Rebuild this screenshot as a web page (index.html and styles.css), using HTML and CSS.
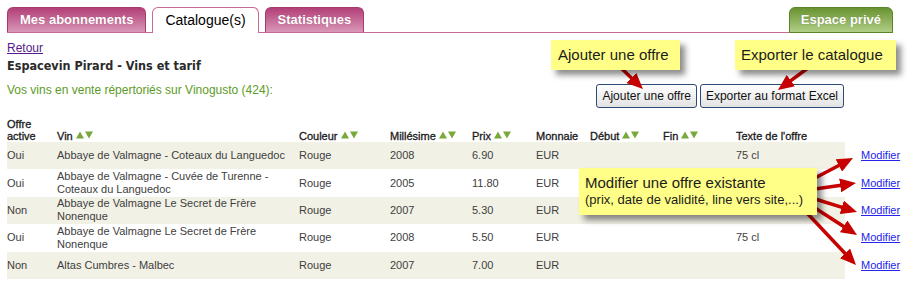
FILE: index.html
```html
<!DOCTYPE html>
<html lang="fr">
<head>
<meta charset="utf-8">
<title>Catalogue(s) - Espace privé</title>
<link rel="stylesheet" href="styles.css">
</head>
<body>
<div class="page">
  <nav class="tabs">
    <a class="tab tab-pink" href="#">Mes abonnements</a>
    <a class="tab tab-active" href="#">Catalogue(s)</a>
    <a class="tab tab-pink" href="#">Statistiques</a>
    <span class="tabs-fill"></span>
    <a class="tab tab-green" href="#">Espace privé</a>
  </nav>

  <section class="intro">
    <div class="intro-text">
      <a class="back" href="#">Retour</a>
      <h1>Espacevin Pirard - Vins et tarif</h1>
      <p class="count">Vos vins en vente répertoriés sur Vinogusto (424):</p>
    </div>
    <div class="actions">
      <button type="button">Ajouter une offre</button>
      <button type="button">Exporter au format Excel</button>
    </div>
  </section>

  <table class="wines">
    <colgroup>
      <col class="c-active"><col class="c-vin"><col class="c-couleur"><col class="c-mill"><col class="c-prix"><col class="c-monnaie"><col class="c-debut"><col class="c-fin"><col class="c-texte"><col class="c-edit">
    </colgroup>
    <thead>
      <tr>
        <th>Offre<br>active</th>
        <th>Vin <svg class="sort" viewBox="0 0 17 8"><path d="M0 7.5L4 0.5L8 7.5Z M9 0.5H17L13 7.5Z"/></svg></th>
        <th>Couleur <svg class="sort" viewBox="0 0 17 8"><path d="M0 7.5L4 0.5L8 7.5Z M9 0.5H17L13 7.5Z"/></svg></th>
        <th>Millésime <svg class="sort" viewBox="0 0 17 8"><path d="M0 7.5L4 0.5L8 7.5Z M9 0.5H17L13 7.5Z"/></svg></th>
        <th>Prix <svg class="sort" viewBox="0 0 17 8"><path d="M0 7.5L4 0.5L8 7.5Z M9 0.5H17L13 7.5Z"/></svg></th>
        <th>Monnaie</th>
        <th>Début <svg class="sort" viewBox="0 0 17 8"><path d="M0 7.5L4 0.5L8 7.5Z M9 0.5H17L13 7.5Z"/></svg></th>
        <th>Fin <svg class="sort" viewBox="0 0 17 8"><path d="M0 7.5L4 0.5L8 7.5Z M9 0.5H17L13 7.5Z"/></svg></th>
        <th>Texte de l'offre</th>
        <th class="edit"></th>
      </tr>
    </thead>
    <tbody>
      <tr><td>Oui</td><td>Abbaye de Valmagne - Coteaux du Languedoc</td><td>Rouge</td><td>2008</td><td>6.90</td><td>EUR</td><td></td><td></td><td>75 cl</td><td class="edit"><a href="#">Modifier</a></td></tr>
      <tr><td>Oui</td><td>Abbaye de Valmagne - Cuvée de Turenne - Coteaux du Languedoc</td><td>Rouge</td><td>2005</td><td>11.80</td><td>EUR</td><td></td><td></td><td></td><td class="edit"><a href="#">Modifier</a></td></tr>
      <tr><td>Non</td><td>Abbaye de Valmagne Le Secret de Frère Nonenque</td><td>Rouge</td><td>2007</td><td>5.30</td><td>EUR</td><td></td><td></td><td></td><td class="edit"><a href="#">Modifier</a></td></tr>
      <tr><td>Oui</td><td>Abbaye de Valmagne Le Secret de Frère Nonenque</td><td>Rouge</td><td>2008</td><td>5.50</td><td>EUR</td><td></td><td></td><td>75 cl</td><td class="edit"><a href="#">Modifier</a></td></tr>
      <tr><td>Non</td><td>Altas Cumbres - Malbec</td><td>Rouge</td><td>2007</td><td>7.00</td><td>EUR</td><td></td><td></td><td></td><td class="edit"><a href="#">Modifier</a></td></tr>
    </tbody>
  </table>

  <svg class="arrows" viewBox="0 0 909 284">
    <defs>
      <marker id="head" viewBox="0 0 16 14" refX="8" refY="7" markerWidth="16" markerHeight="14" markerUnits="userSpaceOnUse" orient="auto">
        <path d="M0 0L16 7L0 14Z" fill="#c70000"/>
      </marker>
    </defs>
    <g stroke="#c70000" stroke-width="3.5" fill="none" marker-end="url(#head)">
      <line x1="618" y1="65" x2="637.2" y2="83.5"/>
      <line x1="812" y1="65" x2="784.4" y2="85.3"/>
      <line x1="815" y1="178" x2="845.9" y2="161.7"/>
      <line x1="815" y1="189" x2="848.1" y2="184.2"/>
      <line x1="815" y1="199" x2="849.4" y2="209.6"/>
      <line x1="815" y1="208" x2="850.3" y2="230.7"/>
      <line x1="807" y1="213" x2="850.5" y2="259.2"/>
    </g>
  </svg>

  <div class="callout callout-add">Ajouter une offre</div>
  <div class="callout callout-export">Exporter le catalogue</div>
  <div class="callout callout-edit">
    <span class="callout-title">Modifier une offre existante</span>
    <span class="callout-sub">(prix, date de validité, line vers site,...)</span>
  </div>
</div>
</body>
</html>
```

FILE: styles.css
```css
* {
  box-sizing: border-box;
}

body {
  margin: 0;
  background: #fff;
  font-family: "Liberation Sans", Arial, sans-serif;
}

.page {
  position: relative;
  width: 909px;
  height: 284px;
  padding: 7px 7px 0;
  overflow: hidden;
}

/* Tabs */
.tabs {
  display: flex;
  align-items: flex-end;
  gap: 6px;
  height: 26px;
  margin-right: 9px;
  border-bottom: 1px solid #c86a96;
}

.tab {
  display: block;
  height: 25px;
  padding: 0 12px;
  border: 1px solid;
  border-bottom: 0;
  border-radius: 6px 6px 0 0;
  font-size: 13px;
  font-weight: bold;
  line-height: 23px;
  color: #fff;
  text-decoration: none;
  white-space: nowrap;
}

.tab-pink {
  background: linear-gradient(#b23f78, #d997b7);
  border-color: #a73a6e;
  text-shadow: 0 0 1px rgba(90, 0, 40, 0.35);
}

.tab-active {
  height: 26px;
  margin-bottom: -1px;
  background: #fff;
  border-color: #c86a96;
  color: #000;
  font-size: 14px;
  font-weight: normal;
  line-height: 24px;
}

.tab-green {
  height: 26px;
  margin-bottom: -1px;
  padding: 0 11px;
  background: linear-gradient(#689330, #b1ce86);
  border-color: #5a8427;
  border-bottom: 1px solid #5a8427;
  text-shadow: 0 0 1px rgba(20, 50, 0, 0.35);
}

.tabs-fill {
  flex: 1;
}

/* Intro */
.intro {
  display: flex;
  justify-content: space-between;
  align-items: flex-start;
  width: 838px;
}

.intro-text {
  padding-top: 8px;
}

.back {
  display: block;
  font-size: 12px;
  line-height: 14px;
  color: #551a8b;
}

.intro h1 {
  margin: 3px 0 0;
  font-family: "DejaVu Sans Condensed", "DejaVu Sans", sans-serif;
  font-size: 12.5px;
  font-weight: bold;
  line-height: 16px;
  color: #2a2a2a;
}

.count {
  margin: 9px 0 0;
  font-size: 12px;
  line-height: 14px;
  color: #5c9b26;
}

.actions {
  display: flex;
  gap: 3px;
  margin-top: 51px;
  margin-right: 1px;
}

.actions button {
  height: 24px;
  padding: 0 5px;
  border: 1px solid #2b4a75;
  border-radius: 3px;
  background: linear-gradient(#fefefe, #e3e3e3);
  font-family: "Liberation Sans", Arial, sans-serif;
  font-size: 12px;
  color: #111;
}

/* Table */
.wines {
  width: 895px;
  margin-top: 10px;
  table-layout: fixed;
  border-collapse: collapse;
  font-size: 11px;
}

.c-active { width: 50px; }
.c-vin { width: 242px; }
.c-couleur { width: 91px; }
.c-mill { width: 82px; }
.c-prix { width: 64px; }
.c-monnaie { width: 54px; }
.c-debut { width: 73px; }
.c-fin { width: 73px; }
.c-texte { width: 109px; }
.c-edit { width: 57px; }

.wines th {
  padding: 0;
  text-align: left;
  vertical-align: bottom;
  font-weight: normal;
  line-height: 12px;
  color: #1a1a1a;
  -webkit-text-stroke: 0.3px #1a1a1a;
  white-space: nowrap;
}

.sort {
  width: 17px;
  height: 8px;
  vertical-align: 1px;
  fill: #79a93b;
}

.wines td {
  height: 27.4px;
  padding: 0;
  line-height: 13px;
  color: #404040;
  vertical-align: middle;
}

.wines tbody tr:nth-child(odd) td:not(.edit) {
  background: #f2f1e6;
}

.wines .edit {
  padding-left: 16px;
}

.edit a {
  color: #2424ea;
}

/* Annotations laid over the page */
.arrows {
  position: absolute;
  left: 0;
  top: 0;
  width: 909px;
  height: 284px;
  pointer-events: none;
}

.callout {
  position: absolute;
  background: #ffff88;
  box-shadow: 5px 5px 6px rgba(0, 0, 0, 0.45);
  color: #1c1c1c;
  font-size: 15px;
  white-space: nowrap;
}

.callout-add {
  left: 551px;
  top: 40px;
  width: 129px;
  height: 30px;
  padding-left: 7px;
  line-height: 30px;
}

.callout-export {
  left: 735px;
  top: 40px;
  width: 161px;
  height: 30px;
  padding-left: 6px;
  line-height: 30px;
}

.callout-edit {
  display: flex;
  flex-direction: column;
  left: 579px;
  top: 168px;
  width: 238px;
  height: 47px;
  padding: 6px 0 0 6px;
}

.callout-title {
  font-size: 15px;
  line-height: 18px;
}

.callout-sub {
  font-size: 13px;
  line-height: 15px;
}
```
